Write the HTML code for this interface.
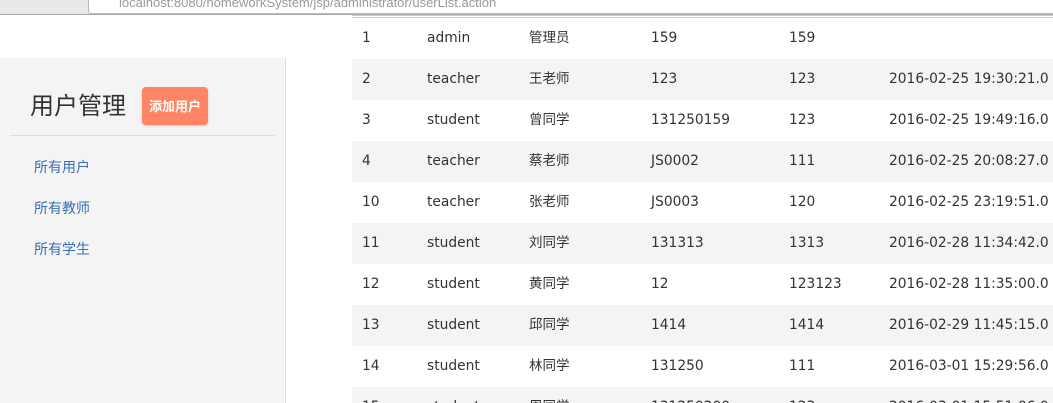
<!DOCTYPE html>
<html><head><meta charset="utf-8"><style>
html,body{margin:0;width:1053px;height:403px;overflow:hidden}
body{background:#fff;font-family:"DejaVu Sans","Noto Sans CJK SC",sans-serif;font-size:13.8px;color:#333;position:relative}
.chrome{position:absolute;left:0;top:0;width:1053px;height:14px;background:#e8e8e8;border-bottom:1px solid #a8a8a8}
.url{position:absolute;left:88px;top:-8px;width:980px;height:20px;background:#fff;border:1px solid #bbb;border-radius:3px;font:13px "Liberation Sans",sans-serif;color:#999}
.url span{position:absolute;left:30px;top:2px}
.side{position:absolute;left:0;top:58px;width:285px;height:345px;background:#f4f4f4;border-right:1px solid #ddd}
.title{position:absolute;left:30px;top:29px;font:24px/34px "Noto Sans CJK SC",sans-serif;color:#333}
.btn{position:absolute;left:142px;top:29px;width:66px;height:38px;background:#ff8566;border-radius:4px;color:#fff;font:bold 13px "Noto Sans CJK SC",sans-serif;line-height:38px;text-align:center;box-shadow:0 1px 2px rgba(0,0,0,.2)}
.hr{position:absolute;left:10px;top:77px;width:265px;border-top:1px solid #ddd}
.lk{position:absolute;left:34px;font:14px/20px "Noto Sans CJK SC",sans-serif;color:#3a6fb0}
table{position:absolute;left:352px;top:15px;border-collapse:collapse;border-top:3px double #ccc;width:720px}
td{height:41px;line-height:41px;padding:0 0 0 10px;white-space:nowrap;overflow:hidden}
tr:nth-child(even) td{background:#f4f4f4}
td:nth-child(3) span{display:inline-block;font:13.5px/20px "Noto Sans CJK SC",sans-serif;vertical-align:middle;position:relative;top:-2px}
td:nth-child(1){width:55px}td:nth-child(2){width:92px}td:nth-child(3){width:112px}td:nth-child(4){width:128px}td:nth-child(5){width:90px}
</style></head><body>
<div class="chrome"><div class="url"><span>localhost:8080/homeworkSystem/jsp/administrator/userList.action</span></div></div>
<div class="side">
<div class="title">用户管理</div><div class="btn">添加用户</div>
<div class="hr"></div>
<div class="lk" style="top:99px">所有用户</div>
<div class="lk" style="top:140px">所有教师</div>
<div class="lk" style="top:181px">所有学生</div>
</div>
<table>
<tr><td>1</td><td>admin</td><td><span>管理员</span></td><td>159</td><td>159</td><td></td></tr>
<tr><td>2</td><td>teacher</td><td><span>王老师</span></td><td>123</td><td>123</td><td>2016-02-25 19:30:21.0</td></tr>
<tr><td>3</td><td>student</td><td><span>曾同学</span></td><td>131250159</td><td>123</td><td>2016-02-25 19:49:16.0</td></tr>
<tr><td>4</td><td>teacher</td><td><span>蔡老师</span></td><td>JS0002</td><td>111</td><td>2016-02-25 20:08:27.0</td></tr>
<tr><td>10</td><td>teacher</td><td><span>张老师</span></td><td>JS0003</td><td>120</td><td>2016-02-25 23:19:51.0</td></tr>
<tr><td>11</td><td>student</td><td><span>刘同学</span></td><td>131313</td><td>1313</td><td>2016-02-28 11:34:42.0</td></tr>
<tr><td>12</td><td>student</td><td><span>黄同学</span></td><td>12</td><td>123123</td><td>2016-02-28 11:35:00.0</td></tr>
<tr><td>13</td><td>student</td><td><span>邱同学</span></td><td>1414</td><td>1414</td><td>2016-02-29 11:45:15.0</td></tr>
<tr><td>14</td><td>student</td><td><span>林同学</span></td><td>131250</td><td>111</td><td>2016-03-01 15:29:56.0</td></tr>
<tr><td>15</td><td>student</td><td><span>周同学</span></td><td>131250200</td><td>123</td><td>2016-03-01 15:51:06.0</td></tr>
</table>
</body></html>
